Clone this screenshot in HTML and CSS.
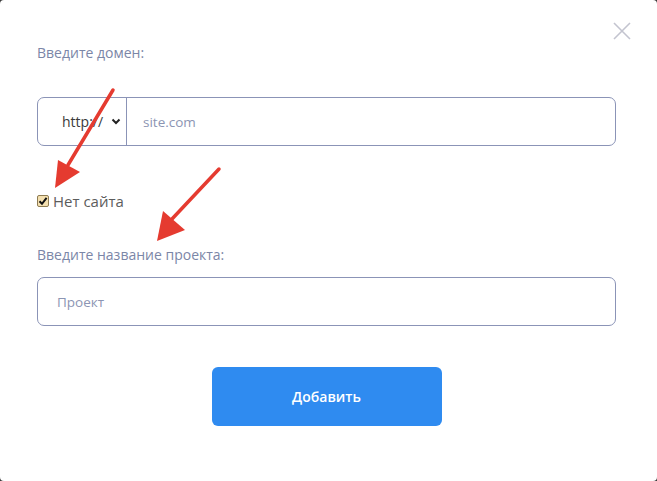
FILE: index.html
```html
<!DOCTYPE html>
<html>
<head>
    <meta charset="UTF-8">
    <title>Добавить проект</title>
    <link rel="stylesheet" href="styles.css">
</head>
<body>
<div class="modal">
    <button class="modal-close" type="button" aria-label="Закрыть">
        <svg width="18" height="18" viewBox="0 0 18 18">
            <path d="M1 1 L17 17 M17 1 L1 17" stroke="#c3c4cf" stroke-width="1.6" fill="none"/>
        </svg>
    </button>

    <p class="field-label">Введите домен:</p>
    <div class="domain-group">
        <div class="domain-proto">
            <span>http://</span>
            <svg class="chevron" width="10" height="7" viewBox="0 0 10 7">
                <path d="M1.5 1.5 L5 5 L8.5 1.5" stroke="#222" stroke-width="2" fill="none"/>
            </svg>
        </div>
        <div class="domain-input">site.com</div>
    </div>

    <label class="no-site">
        <span class="check-box">
            <svg width="10" height="10" viewBox="0 0 10 10">
                <path d="M1.5 5.2 L4 7.8 L8.6 1.8" stroke="#111" stroke-width="2" fill="none"/>
            </svg>
        </span>
        Нет сайта
    </label>

    <p class="field-label project-label">Введите название проекта:</p>
    <div class="text-input">Проект</div>

    <div class="actions">
        <button class="btn-add" type="button">Добавить</button>
    </div>

    <!-- стрелки поверх формы -->
    <svg class="arrows" width="657" height="481" viewBox="0 0 657 481">
        <path d="M113 90 L68 165" stroke="#e53b30" stroke-width="3.5" stroke-linecap="round"/>
        <polygon points="55,188 58,160 80,172" fill="#e53b30"/>
        <path d="M219 169 L172 219" stroke="#e53b30" stroke-width="3.5" stroke-linecap="round"/>
        <polygon points="157,241 163,211 185,230" fill="#e53b30"/>
    </svg>
</div>
</body>
</html>
```

FILE: styles.css
```css
html, body {
    margin: 0;
    height: 100%;
    background: #3a3a3a;
}

.modal {
    position: relative;
    box-sizing: border-box;
    width: 657px;
    height: 481px;
    padding: 44px 41px 0 37px;
    background: #fff;
    border-radius: 4px;
    font-family: "Open Sans", "Liberation Sans", sans-serif;
}

.modal-close {
    position: absolute;
    top: 22px;
    right: 26px;
    padding: 0;
    border: 0;
    background: none;
    line-height: 0;
}

.field-label {
    margin: 0;
    font-size: 14px;
    line-height: 18px;
    color: #7b86a7;
}

.domain-group {
    display: flex;
    height: 49px;
    margin-top: 35px;
    box-sizing: border-box;
    border: 1px solid #8b94b7;
    border-radius: 7px;
}

.domain-proto {
    display: flex;
    align-items: center;
    flex-shrink: 0;
    width: 89px;
    box-sizing: border-box;
    padding: 0 5px 0 24px;
    border-right: 1px solid #8b94b7;
    font-size: 14px;
    color: #3a3a3a;
}

.chevron {
    flex-shrink: 0;
    margin-left: auto;
}

.domain-input {
    display: flex;
    align-items: center;
    padding-left: 16px;
    font-size: 13.5px;
    color: #8c95b3;
}

.no-site {
    display: flex;
    align-items: center;
    gap: 4px;
    margin-top: 44px;
    font-size: 15px;
    line-height: 22px;
    color: #5c5c5c;
}

.check-box {
    display: flex;
    align-items: center;
    justify-content: center;
    width: 12px;
    height: 12px;
    box-sizing: border-box;
    border: 1px solid #8f7c52;
    border-radius: 2px;
    background: #f4e0b0;
}

.project-label {
    margin-top: 34px;
}

.text-input {
    display: flex;
    align-items: center;
    height: 49px;
    margin-top: 13px;
    box-sizing: border-box;
    padding-left: 19px;
    border: 1px solid #8b94b7;
    border-radius: 7px;
    font-size: 13.5px;
    color: #8c95b3;
}

.actions {
    display: flex;
    justify-content: center;
    margin-top: 41px;
}

.btn-add {
    width: 230px;
    height: 59px;
    border: 0;
    border-radius: 6px;
    background: #2f8bf0;
    color: #fff;
    font-family: "Open Sans", "Liberation Sans", sans-serif;
    font-size: 14px;
    font-weight: 600;
}

.arrows {
    position: absolute;
    top: 0;
    left: 0;
    pointer-events: none;
}
```
